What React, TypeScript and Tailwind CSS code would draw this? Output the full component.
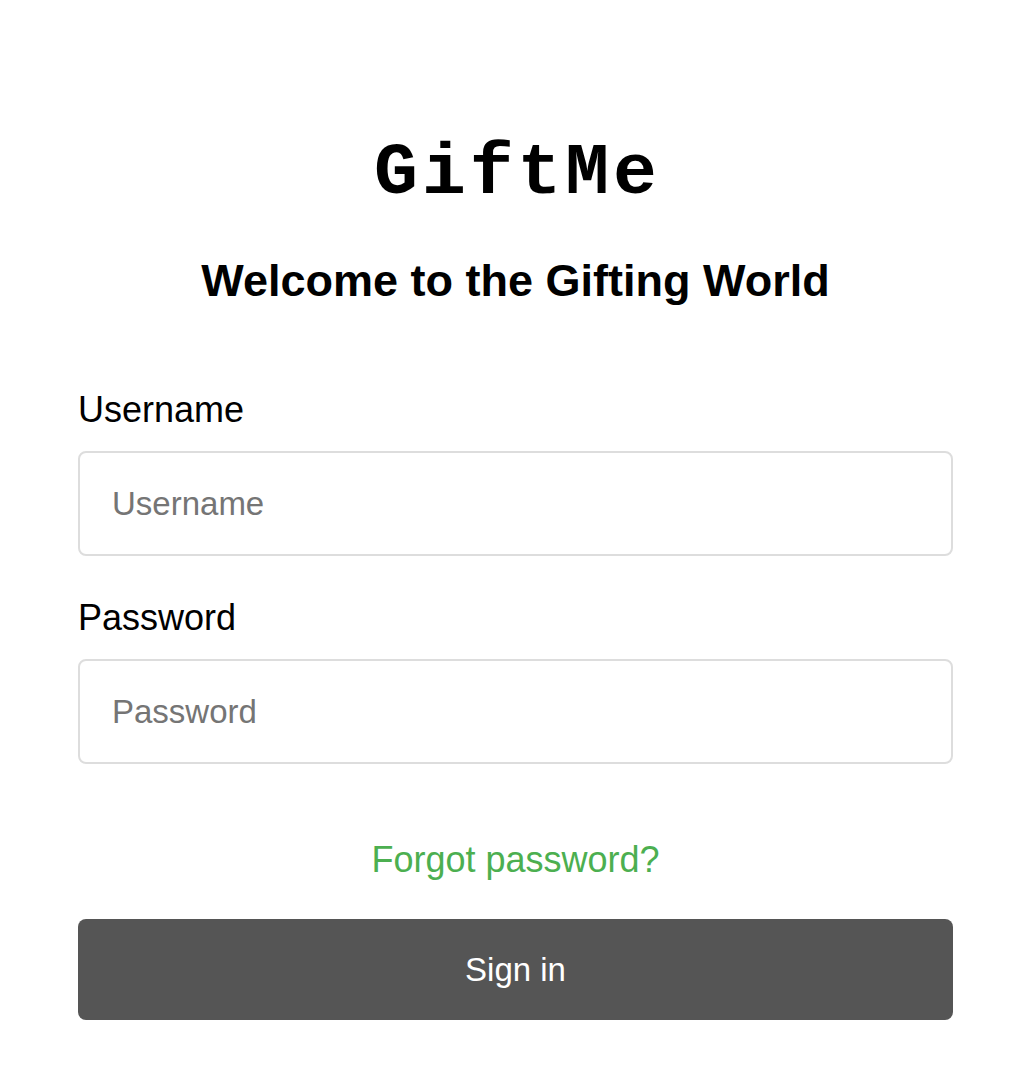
export default function App() {
  return (
    <div className="min-h-screen bg-white pl-[78px] pr-[57px] pt-[132px] font-['Liberation_Sans',Arial,sans-serif] text-black">
      <h1 className="pl-[4px] text-center font-['Liberation_Mono','Courier_New',monospace] text-[73px] font-bold leading-[83px] tracking-[4px]">
        GiftMe
      </h1>
      <h2 className="mt-[40px] text-center text-[45px] font-bold leading-[52px]">
        Welcome to the Gifting World
      </h2>

      <form className="mt-[83px] flex flex-col" onSubmit={(e) => e.preventDefault()}>
        <label htmlFor="username" className="text-[36px] leading-[40px]">
          Username
        </label>
        <input
          id="username"
          type="text"
          placeholder="Username"
          className="mt-[21px] h-[105px] w-full rounded-lg border-2 border-[#dddddd] px-[32px] text-[33px] outline-none placeholder:text-[#757575]"
        />

        <label htmlFor="password" className="mt-[42px] text-[36px] leading-[40px]">
          Password
        </label>
        <input
          id="password"
          type="password"
          placeholder="Password"
          className="mt-[21px] h-[105px] w-full rounded-lg border-2 border-[#dddddd] px-[32px] text-[33px] outline-none placeholder:text-[#757575]"
        />

        <a href="#" className="mt-[76px] self-center text-[36px] leading-[40px] text-[#4caf50]">
          Forgot password?
        </a>

        <button
          type="submit"
          className="mt-[39px] h-[101px] w-full rounded-lg bg-[#555555] text-[33px] text-white"
        >
          Sign in
        </button>
      </form>
    </div>
  );
}
